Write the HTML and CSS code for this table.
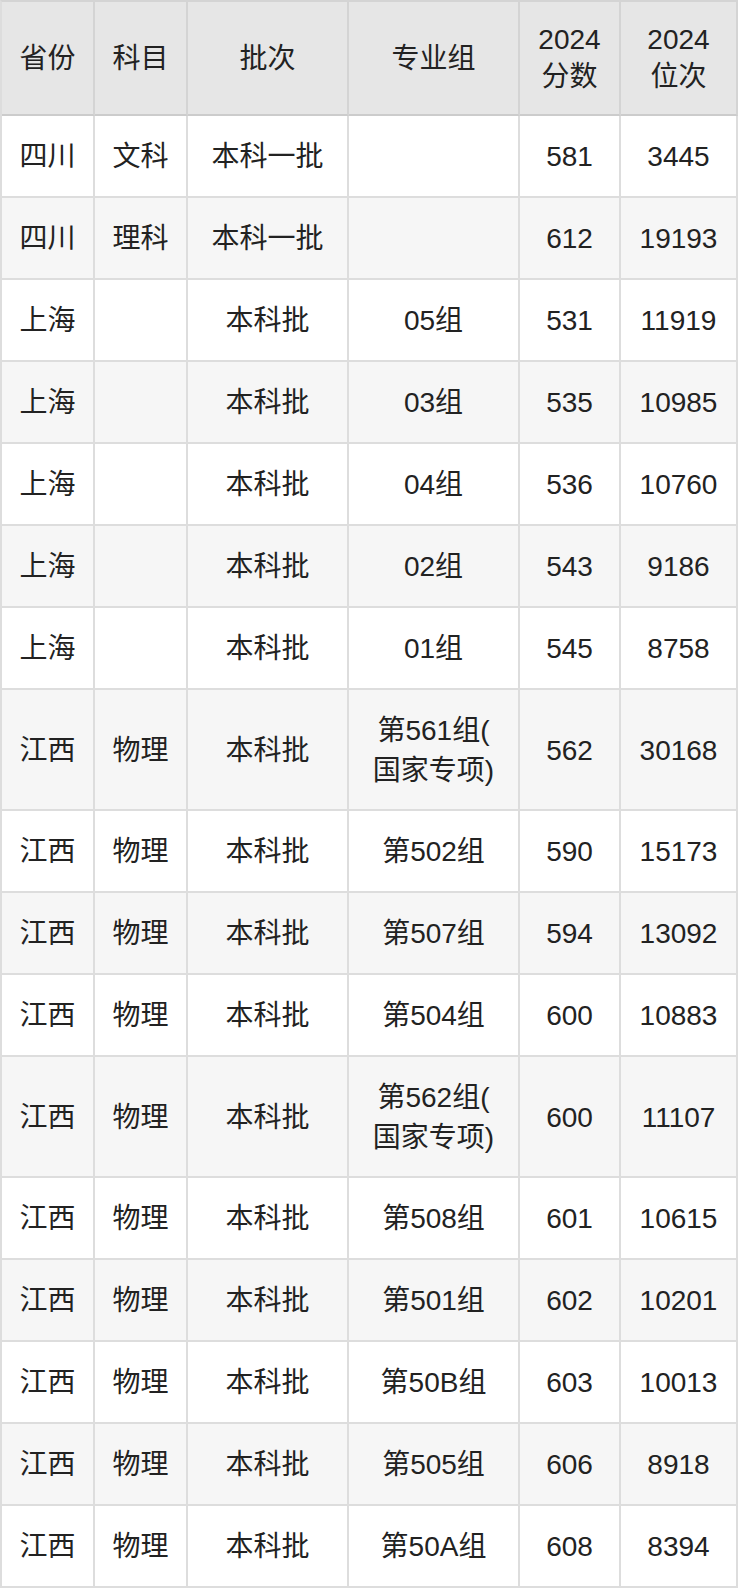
FILE: index.html
```html
<!DOCTYPE html>
<html lang="zh-CN">
<head>
<meta charset="utf-8">
<title>分数线</title>
<link rel="stylesheet" href="styles.css">
</head>
<body>
<div class="table">
  <div class="row head">
    <div class="cell">省份</div><div class="cell">科目</div><div class="cell">批次</div><div class="cell">专业组</div><div class="cell">2024<br>分数</div><div class="cell">2024<br>位次</div>
  </div>
  <div class="row"><div class="cell">四川</div><div class="cell">文科</div><div class="cell">本科一批</div><div class="cell"></div><div class="cell">581</div><div class="cell">3445</div></div>
  <div class="row alt"><div class="cell">四川</div><div class="cell">理科</div><div class="cell">本科一批</div><div class="cell"></div><div class="cell">612</div><div class="cell">19193</div></div>
  <div class="row"><div class="cell">上海</div><div class="cell"></div><div class="cell">本科批</div><div class="cell">05组</div><div class="cell">531</div><div class="cell">11919</div></div>
  <div class="row alt"><div class="cell">上海</div><div class="cell"></div><div class="cell">本科批</div><div class="cell">03组</div><div class="cell">535</div><div class="cell">10985</div></div>
  <div class="row"><div class="cell">上海</div><div class="cell"></div><div class="cell">本科批</div><div class="cell">04组</div><div class="cell">536</div><div class="cell">10760</div></div>
  <div class="row alt"><div class="cell">上海</div><div class="cell"></div><div class="cell">本科批</div><div class="cell">02组</div><div class="cell">543</div><div class="cell">9186</div></div>
  <div class="row"><div class="cell">上海</div><div class="cell"></div><div class="cell">本科批</div><div class="cell">01组</div><div class="cell">545</div><div class="cell">8758</div></div>
  <div class="row alt tall"><div class="cell">江西</div><div class="cell">物理</div><div class="cell">本科批</div><div class="cell">第561组(<br>国家专项)</div><div class="cell">562</div><div class="cell">30168</div></div>
  <div class="row"><div class="cell">江西</div><div class="cell">物理</div><div class="cell">本科批</div><div class="cell">第502组</div><div class="cell">590</div><div class="cell">15173</div></div>
  <div class="row alt"><div class="cell">江西</div><div class="cell">物理</div><div class="cell">本科批</div><div class="cell">第507组</div><div class="cell">594</div><div class="cell">13092</div></div>
  <div class="row"><div class="cell">江西</div><div class="cell">物理</div><div class="cell">本科批</div><div class="cell">第504组</div><div class="cell">600</div><div class="cell">10883</div></div>
  <div class="row alt tall"><div class="cell">江西</div><div class="cell">物理</div><div class="cell">本科批</div><div class="cell">第562组(<br>国家专项)</div><div class="cell">600</div><div class="cell">11107</div></div>
  <div class="row"><div class="cell">江西</div><div class="cell">物理</div><div class="cell">本科批</div><div class="cell">第508组</div><div class="cell">601</div><div class="cell">10615</div></div>
  <div class="row alt"><div class="cell">江西</div><div class="cell">物理</div><div class="cell">本科批</div><div class="cell">第501组</div><div class="cell">602</div><div class="cell">10201</div></div>
  <div class="row"><div class="cell">江西</div><div class="cell">物理</div><div class="cell">本科批</div><div class="cell">第50B组</div><div class="cell">603</div><div class="cell">10013</div></div>
  <div class="row alt"><div class="cell">江西</div><div class="cell">物理</div><div class="cell">本科批</div><div class="cell">第505组</div><div class="cell">606</div><div class="cell">8918</div></div>
  <div class="row"><div class="cell">江西</div><div class="cell">物理</div><div class="cell">本科批</div><div class="cell">第50A组</div><div class="cell">608</div><div class="cell">8394</div></div>
</div>
</body>
</html>
```

FILE: styles.css
```css
html, body {
  margin: 0;
  padding: 0;
  background: #ffffff;
}

body {
  font-family: "Liberation Sans", "Noto Sans CJK SC", sans-serif;
  font-size: 28px;
  color: #222222;
}

.table {
  width: 736px;
  display: flex;
  flex-direction: column;
  border-left: 2px solid #dddddd;
  border-top: 2px solid #d4d4d4;
}

.row {
  display: grid;
  grid-template-columns: 93px 93px 161px 171px 101px 117px;
  height: 82px;
  background: #ffffff;
}

.row.alt {
  background: #f6f6f6;
}

.row.tall {
  height: 121px;
}

.row.head {
  height: 114px;
  background: #e6e6e6;
}

.cell {
  box-sizing: border-box;
  display: flex;
  align-items: center;
  justify-content: center;
  text-align: center;
  padding-top: 2px;
  border-right: 2px solid #dddddd;
  border-bottom: 2px solid #dddddd;
  line-height: 40px;
}

.head .cell {
  padding-top: 0;
  line-height: 37px;
  border-right-color: #d4d4d4;
  border-bottom-color: #cccccc;
}
```
